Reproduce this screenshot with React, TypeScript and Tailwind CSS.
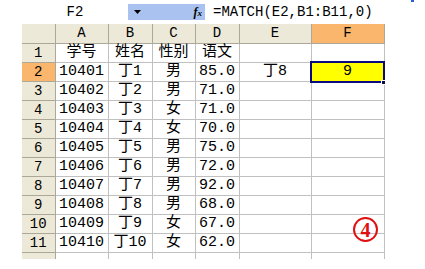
import React from 'react';

const COLS = ['A', 'B', 'C', 'D', 'E', 'F'];
const WIDTHS = ['w-[53px]', 'w-[44px]', 'w-[43px]', 'w-[44px]', 'w-[72px]', 'w-[73px]'];

const ROWS: string[][] = [
  ['学号', '姓名', '性别', '语文', '', ''],
  ['10401', '丁1', '男', '85.0', '丁8', '9'],
  ['10402', '丁2', '男', '71.0', '', ''],
  ['10403', '丁3', '女', '71.0', '', ''],
  ['10404', '丁4', '女', '70.0', '', ''],
  ['10405', '丁5', '男', '75.0', '', ''],
  ['10406', '丁6', '男', '72.0', '', ''],
  ['10407', '丁7', '男', '92.0', '', ''],
  ['10408', '丁8', '男', '68.0', '', ''],
  ['10409', '丁9', '女', '67.0', '', ''],
  ['10410', '丁10', '女', '62.0', '', ''],
];

export default function App() {
  return (
    <div className="relative w-[425px] h-[269px] overflow-hidden bg-white text-black font-['Liberation_Mono','Noto_Sans_CJK_SC',monospace] text-[14px] leading-none">
      {/* formula bar */}
      <div className="flex h-[24px] items-center">
        <div className="ml-[22px] w-[106px] text-center">F2</div>
        <div className="relative flex h-[16px] w-[77px] items-center bg-[#a9c2ef]">
          <svg className="ml-[6px]" width="7" height="4" viewBox="0 0 7 4">
            <path d="M0 0h7L3.5 4z" fill="#000" />
          </svg>
          <span className="ml-auto mr-[3px] font-['Liberation_Serif',serif] text-[12px] italic font-bold">
            f<span className="text-[9px]">x</span>
          </span>
        </div>
        <div className="ml-[8px]">=MATCH(E2,B1:B11,0)</div>
      </div>
      <div className="absolute left-[411px] top-0 h-[2px] w-[3px] bg-[#2a5bd8]" />

      {/* sheet grid */}
      <table className="ml-[22px] border-collapse table-fixed text-[15px]">
        <thead>
          <tr className="h-[19px]">
            <th className="w-[33px] p-0 bg-[#ece9d8] border-r border-b border-[#aca899]" />
            {COLS.map((c, i) => (
              <th
                key={c}
                className={`${WIDTHS[i]} p-0 font-normal text-[14px] text-center border-r border-b border-[#aca899] ${
                  c === 'F' ? 'bg-[#f9b66c]' : 'bg-[#ece9d8]'
                }`}
              >
                {c}
              </th>
            ))}
          </tr>
        </thead>
        <tbody>
          {ROWS.map((r, ri) => (
            <tr key={ri} className="h-[19px]">
              <td
                className={`p-0 text-[14px] text-center border-r border-b border-[#aca899] ${
                  ri === 1 ? 'bg-[#f9b66c]' : 'bg-[#ece9d8]'
                }`}
              >
                {ri + 1}
              </td>
              {r.map((v, ci) => (
                <td
                  key={ci}
                  className={`p-0 text-center whitespace-nowrap border-r border-b border-[#c0c0c0] ${
                    ri === 1 && ci === 5 ? 'bg-[#ffff00]' : ''
                  }`}
                >
                  {v}
                </td>
              ))}
            </tr>
          ))}
          <tr className="h-[7px]">
            <td className="p-0 bg-[#ece9d8] border-r border-[#aca899]" />
            {COLS.map((c) => (
              <td key={c} className="p-0 border-r border-[#c0c0c0]" />
            ))}
          </tr>
        </tbody>
      </table>

      {/* active cell F2 outline + fill handle */}
      <div className="absolute left-[310px] top-[61px] h-[22px] w-[75px] border-2 border-[#0a0a80]" />
      <div className="absolute left-[381px] top-[80px] h-[5px] w-[5px] bg-[#0a0a50] border border-white" />

      {/* circled marker */}
      <div className="absolute left-[353px] top-[217px] flex h-[25px] w-[25px] items-center justify-center rounded-full border-[2.5px] border-[#e01010] font-['Liberation_Serif',serif] text-[20px] font-bold text-[#e01010]">
        4
      </div>
    </div>
  );
}
